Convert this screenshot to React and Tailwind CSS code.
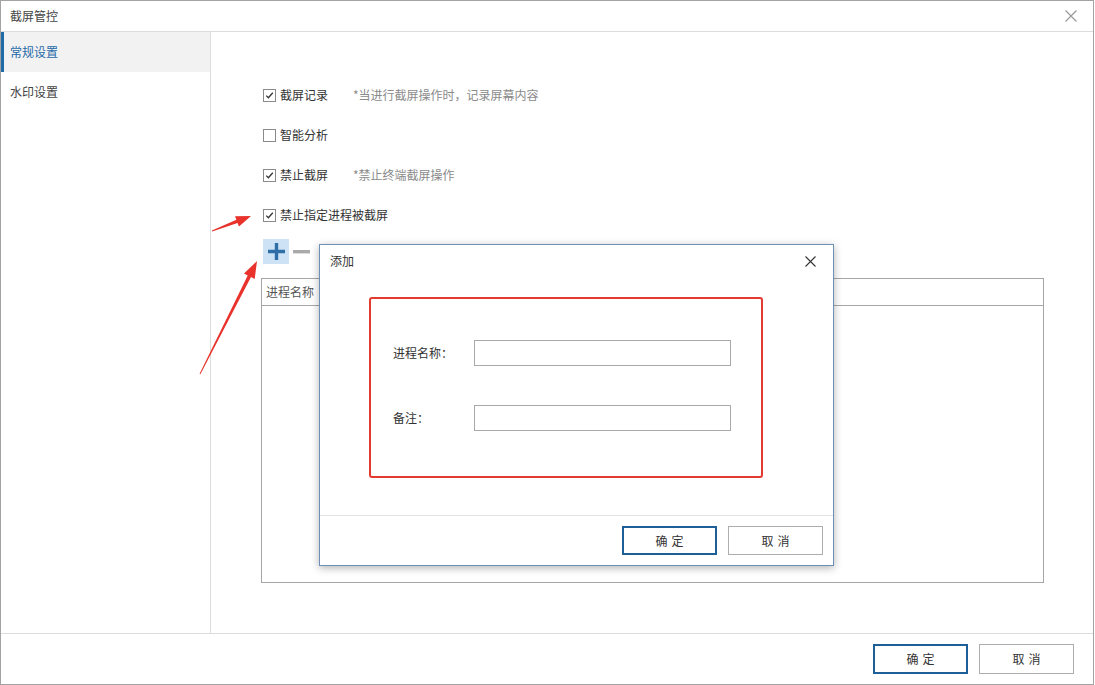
import React from "react"

const font = "font-['Microsoft_YaHei','Noto_Sans_CJK_SC',sans-serif]"

function arrowPoints(tail, tip, headLen, headHalf) {
    const dx = tip[0] - tail[0]
    const dy = tip[1] - tail[1]
    const len = Math.hypot(dx, dy)
    const ux = dx / len
    const uy = dy / len
    const nx = -uy
    const ny = ux
    const bx = tip[0] - ux * headLen
    const by = tip[1] - uy * headLen
    const pts = [
        [tail[0] + nx * 0.4, tail[1] + ny * 0.4],
        [bx + nx * 1.8, by + ny * 1.8],
        [bx + nx * headHalf, by + ny * headHalf],
        tip,
        [bx - nx * headHalf, by - ny * headHalf],
        [bx - nx * 1.8, by - ny * 1.8],
        [tail[0] - nx * 0.4, tail[1] - ny * 0.4],
    ]
    return pts.map((p) => p[0].toFixed(1) + "," + p[1].toFixed(1)).join(" ")
}

function Checkbox({ checked }) {
    return (
        <span className="w-[13px] h-[13px] border border-[#8a8a8a] bg-white flex items-center justify-center shrink-0">
            {checked && (
                <svg width="11" height="11" viewBox="0 0 11 11">
                    <path
                        d="M2.2 5.6 L4.4 7.8 L8.8 2.8"
                        fill="none"
                        stroke="#333"
                        strokeWidth="1.3"
                    />
                </svg>
            )}
        </span>
    )
}

function CheckRow({ checked, label, hint }) {
    return (
        <div className="h-[20px] flex items-center ml-[2px]">
            <Checkbox checked={checked} />
            <span className="ml-[4px] min-w-[73px] whitespace-nowrap text-[12px] text-[#333]">
                {label}
            </span>
            {hint && (
                <span className="text-[12px] text-[#8a8a8a] whitespace-nowrap">
                    {hint}
                </span>
            )}
        </div>
    )
}

function CloseIcon({ color, size = 11 }) {
    return (
        <svg width={size} height={size} viewBox="0 0 11 11">
            <path
                d="M0.5 0.5 L10.5 10.5 M10.5 0.5 L0.5 10.5"
                stroke={color}
                strokeWidth="1.1"
                fill="none"
            />
        </svg>
    )
}

function Button({ primary, children, h = "h-[30px]" }) {
    return (
        <button
            className={`w-[95px] ${h} bg-white text-[12px] text-[#333] tracking-[4px] pl-[4px] ${
                primary
                    ? "border-2 border-[#1f5f98]"
                    : "border border-[#adadad]"
            }`}
        >
            {children}
        </button>
    )
}

export default function App() {
    return (
        <div
            className={`relative w-[1094px] h-[685px] border border-[#a3a3a3] bg-white flex flex-col ${font}`}
        >
            {/* title bar */}
            <div className="h-[31px] border-b border-[#dcdcdc] flex items-center justify-between pl-[9px] pr-[16px] shrink-0">
                <span className="text-[12px] text-[#444]">截屏管控</span>
                <CloseIcon color="#9a9a9a" size={12} />
            </div>

            <div className="flex flex-1 min-h-0">
                {/* sidebar */}
                <div className="w-[210px] border-r border-[#dcdcdc] shrink-0">
                    <div className="h-[40px] bg-[#f2f2f2] border-l-[3px] border-[#1f6aa8] pl-[6px] flex items-center text-[12px] text-[#1f6aa8]">
                        常规设置
                    </div>
                    <div className="h-[40px] pl-[9px] flex items-center text-[12px] text-[#444]">
                        水印设置
                    </div>
                </div>

                {/* content */}
                <div className="flex-1 pl-[50px] pt-[53px] flex flex-col">
                    <div className="flex flex-col gap-[20px]">
                        <CheckRow
                            checked
                            label="截屏记录"
                            hint="*当进行截屏操作时，记录屏幕内容"
                        />
                        <CheckRow label="智能分析" />
                        <CheckRow
                            checked
                            label="禁止截屏"
                            hint="*禁止终端截屏操作"
                        />
                        <CheckRow checked label="禁止指定进程被截屏" />
                    </div>
                    <div className="flex items-center mt-[14px] ml-[2px] gap-[4px]">
                        <span className="w-[26px] h-[25px] bg-[#cde3f5] flex items-center justify-center">
                            <svg width="17" height="17" viewBox="0 0 17 17">
                                <path
                                    d="M8.5 0 V17 M0 8.5 H17"
                                    stroke="#2f6ea6"
                                    strokeWidth="3.4"
                                />
                            </svg>
                        </span>
                        <svg width="17" height="4" viewBox="0 0 17 4">
                            <rect width="17" height="3.4" fill="#a9a9a9" />
                        </svg>
                    </div>
                    <div className="mt-[14px] w-[783px] h-[305px] border border-[#a6a6a6]">
                        <div className="h-[27px] border-b border-[#a6a6a6] flex items-center pl-[4px] text-[12px] text-[#555]">
                            进程名称
                        </div>
                    </div>
                </div>
            </div>

            {/* footer */}
            <div className="h-[51px] border-t border-[#dcdcdc] flex items-center justify-end gap-[11px] pr-[19px] shrink-0">
                <Button primary>确定</Button>
                <Button>取消</Button>
            </div>

            {/* add dialog */}
            <div className="absolute left-[318px] top-[243px] w-[515px] h-[322px] bg-white border border-[#6e90b8] shadow-[0_2px_8px_rgba(0,0,0,0.3)] flex flex-col">
                <div className="h-[32px] flex items-center justify-between pl-[10px] pr-[17px] shrink-0">
                    <span className="text-[12px] text-[#333]">添加</span>
                    <CloseIcon color="#333" />
                </div>
                <div className="flex-1 pt-[20px] pl-[49px]">
                    <div className="w-[394px] h-[181px] border-[2.5px] border-[#e53a32] rounded-[3px] pl-[22px] pt-[41px] flex flex-col gap-[39px]">
                        <div className="flex items-center">
                            <span className="w-[81px] text-[12px] text-[#333]">
                                进程名称：
                            </span>
                            <span className="w-[257px] h-[26px] border border-[#a9a9a9]" />
                        </div>
                        <div className="flex items-center">
                            <span className="w-[81px] text-[12px] text-[#333]">
                                备注：
                            </span>
                            <span className="w-[257px] h-[26px] border border-[#a9a9a9]" />
                        </div>
                    </div>
                </div>
                <div className="h-[50px] border-t border-[#e3e3e3] flex items-center justify-end gap-[11px] pr-[10px] shrink-0">
                    <Button primary h="h-[29px]">
                        确定
                    </Button>
                    <Button h="h-[29px]">取消</Button>
                </div>
            </div>

            {/* red annotation arrows */}
            <svg
                className="absolute left-[-1px] top-[-1px] pointer-events-none"
                width="1095"
                height="685"
            >
                <polygon
                    points={arrowPoints([212, 231], [251, 216], 15, 5.5)}
                    fill="#e8322b"
                />
                <polygon
                    points={arrowPoints([200, 374], [257, 261], 17, 6)}
                    fill="#e8322b"
                />
            </svg>
        </div>
    )
}
